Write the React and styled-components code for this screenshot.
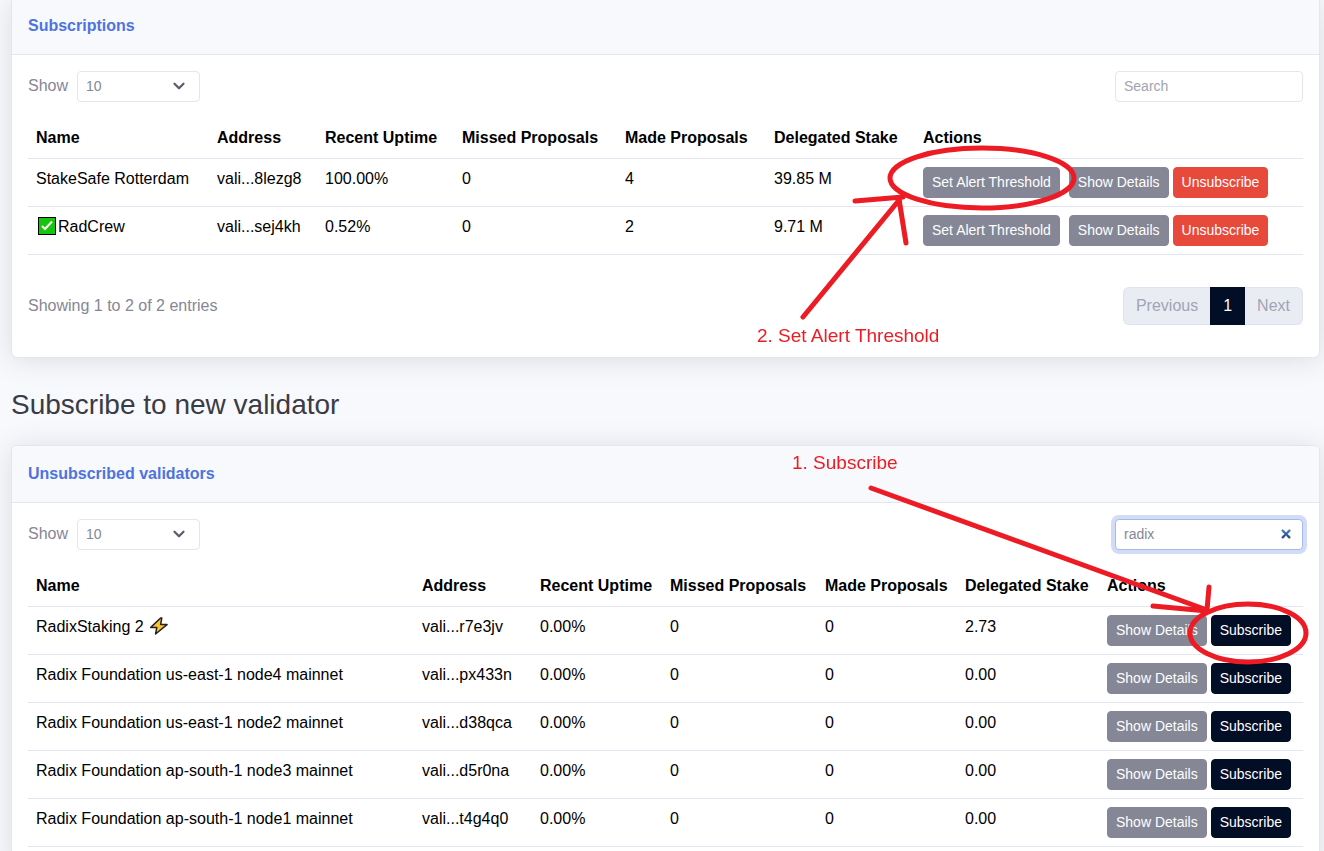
import styled, { createGlobalStyle, css } from "styled-components"
import { useId, useState } from "react"

const subscribed = [
  {
    name: "StakeSafe Rotterdam",
    address: "vali...8lezg8",
    uptime: "100.00%",
    missed: 0,
    made: 4,
    stake: "39.85 M",
  },
  {
    name: "RadCrew",
    badge: "check",
    address: "vali...sej4kh",
    uptime: "0.52%",
    missed: 0,
    made: 2,
    stake: "9.71 M",
  },
]

const unsubscribed = [
  {
    name: "RadixStaking 2",
    badge: "bolt",
    address: "vali...r7e3jv",
    uptime: "0.00%",
    missed: 0,
    made: 0,
    stake: "2.73",
  },
  {
    name: "Radix Foundation us-east-1 node4 mainnet",
    address: "vali...px433n",
    uptime: "0.00%",
    missed: 0,
    made: 0,
    stake: "0.00",
  },
  {
    name: "Radix Foundation us-east-1 node2 mainnet",
    address: "vali...d38qca",
    uptime: "0.00%",
    missed: 0,
    made: 0,
    stake: "0.00",
  },
  {
    name: "Radix Foundation ap-south-1 node3 mainnet",
    address: "vali...d5r0na",
    uptime: "0.00%",
    missed: 0,
    made: 0,
    stake: "0.00",
  },
  {
    name: "Radix Foundation ap-south-1 node1 mainnet",
    address: "vali...t4g4q0",
    uptime: "0.00%",
    missed: 0,
    made: 0,
    stake: "0.00",
  },
]

const headings = [
  "Name",
  "Address",
  "Recent Uptime",
  "Missed Proposals",
  "Made Proposals",
  "Delegated Stake",
  "Actions",
]

// relative column widths, in the order of the headings
const subscribedCols = [ 181, 108, 137, 163, 149, 149, 388 ]
const unsubscribedCols = [ 386, 118, 130, 155, 140, 142, 204 ]

const CheckBadge = () => (
  <Badge viewBox="0 0 18 18" aria-hidden="true">
    <rect x="0.5" y="0.5" width="17" height="17" fill="#16c60c" stroke="#000" />
    <path d="M4 9 L7 12 L14 4.5" fill="none" stroke="#fff" strokeWidth="2" />
  </Badge>
)

const BoltBadge = () => (
  <Badge viewBox="0 0 18 18" aria-hidden="true">
    <path
      d="M10.6 1 L0.8 10.4 H6.8 L5.6 17 L17 7.6 H10.6 L11.8 1 Z"
      fill="#fcc32c"
      stroke="#222"
      strokeWidth="1.5"
      strokeLinejoin="round"
    />
  </Badge>
)

const Toolbar = ({ search, setSearch, focused }) => {
  const id = useId()

  return (
    <ToolbarRow>
      <Length>
        <label htmlFor={`${id}length`}>Show</label>
        <SelectWrap>
          <select id={`${id}length`} defaultValue="10">
            <option>10</option>
            <option>25</option>
            <option>50</option>
          </select>
          <svg viewBox="0 0 16 16" aria-hidden="true">
            <path d="m2 5 6 6 6-6" />
          </svg>
        </SelectWrap>
      </Length>
      <Search
        type="search"
        placeholder="Search"
        aria-label="Search"
        value={search}
        autoFocus={focused}
        onChange={(e) => setSearch(e.target.value)}
      />
    </ToolbarRow>
  )
}

const ValidatorTable = ({ rows, cols, actions }) => (
  <Table>
    <colgroup>
      {cols.map((width, i) => (
        <Col key={headings[ i ]} $width={width} />
      ))}
    </colgroup>
    <thead>
      <tr>
        {headings.map((heading) => (
          <th key={heading}>{heading}</th>
        ))}
      </tr>
    </thead>
    <tbody>
      {rows.map((row) => (
        <tr key={row.address}>
          <td>
            {row.badge === "check" && <CheckBadge />}
            {row.name}
            {row.badge === "bolt" && <> <BoltBadge /></>}
          </td>
          <td>{row.address}</td>
          <td>{row.uptime}</td>
          <td>{row.missed}</td>
          <td>{row.made}</td>
          <td>{row.stake}</td>
          <td>
            <Actions>{actions}</Actions>
          </td>
        </tr>
      ))}
    </tbody>
  </Table>
)

const App = () => {
  const [ subSearch, setSubSearch ] = useState("")
  const [ search, setSearch ] = useState("radix")

  return (
    <>
      <GlobalStyle />
      <Page>
        <Card $attached>
          <CardHeader $attached>
            <h6>Subscriptions</h6>
          </CardHeader>
          <CardBody>
            <Toolbar search={subSearch} setSearch={setSubSearch} />
            <ValidatorTable
              rows={subscribed}
              cols={subscribedCols}
              actions={
                <>
                  <Button $spaced>Set Alert Threshold</Button>
                  <Button>Show Details</Button>
                  <Button $color="#e74a3b">Unsubscribe</Button>
                </>
              }
            />
            <TableFooter>
              <p>Showing 1 to 2 of 2 entries</p>
              <Pagination aria-label="Pages">
                <button disabled>Previous</button>
                <button className="active">1</button>
                <button disabled>Next</button>
              </Pagination>
            </TableFooter>
          </CardBody>
        </Card>

        <Title>Subscribe to new validator</Title>

        <Card>
          <CardHeader>
            <h6>Unsubscribed validators</h6>
          </CardHeader>
          <CardBody>
            <Toolbar search={search} setSearch={setSearch} focused />
            <ValidatorTable
              rows={unsubscribed}
              cols={unsubscribedCols}
              actions={
                <>
                  <Button>Show Details</Button>
                  <Button $color="#020d26">Subscribe</Button>
                </>
              }
            />
          </CardBody>
        </Card>

        <Notes viewBox="0 0 1324 851">
          <ellipse cx="982" cy="178" rx="92" ry="30" />
          <path d="M803 317 L900 199 M855 201 L903 197 M899 199 L906 243" />
          <text x="757" y="342">2. Set Alert Threshold</text>
          <ellipse cx="1248" cy="633" rx="58" ry="29" />
          <path d="M871 488 L1207 610 M1153 606 L1207 611 M1209 587 L1207 610" />
          <text x="792" y="469">1. Subscribe</text>
        </Notes>
      </Page>
    </>
  )
}

export default App

const GlobalStyle = createGlobalStyle`
  * {
    box-sizing: border-box;
  }

  body {
    margin: 0;
    background-color: #f8f9fc;
    color: #858796;
    font-family: "Liberation Sans", Arial, sans-serif;
    font-size: 16px;
    line-height: 24px;
  }

  h3, h6, p {
    margin: 0;
  }

  button, input, select {
    font-family: inherit;
  }
`

const Page = styled.main`
  position: relative;
  height: 100vh;
  padding: 0 4px 0 11px;
  overflow: hidden;
`

const Card = styled.section`
  background-color: #fff;
  border: 1px solid #e3e6f0;
  border-radius: 6px;
  box-shadow: 0 2px 28px rgba(58, 59, 69, 0.15);

  ${({ $attached }) => $attached && css`
    border-top: 0;
    border-top-left-radius: 0;
    border-top-right-radius: 0;
  `}
`

const CardHeader = styled.header`
  padding: ${({ $attached }) => ($attached ? "14px 16px 16px" : "16px")};
  background-color: #f8f9fc;
  border-bottom: 1px solid #e3e6f0;
  border-radius: ${({ $attached }) => ($attached ? "0" : "5px 5px 0 0")};

  h6 {
    color: #4e73df;
    font-size: 16px;
    font-weight: bold;
  }
`

const CardBody = styled.div`
  padding: 16px;
`

const Title = styled.h3`
  margin: 30px 0 23px;
  color: #3a3b45;
  font-size: 28px;
  font-weight: 400;
  line-height: 34px;
`

const ToolbarRow = styled.div`
  display: flex;
  justify-content: space-between;
  margin-bottom: 16px;
`

const Length = styled.div`
  display: flex;
  align-items: center;
  gap: 9px;

  label {
    padding-bottom: 2px;
  }
`

const field = css`
  height: 31px;
  padding: 4px 8px;
  background-color: #fff;
  border: 1px solid #e3e6f0;
  border-radius: 4px;
  color: #858796;
  font-size: 14px;
  line-height: 21px;
`

const SelectWrap = styled.div`
  position: relative;
  height: 31px;

  select {
    ${field}
    width: 123px;
    appearance: none;
  }

  svg {
    position: absolute;
    top: 9px;
    right: 13px;
    width: 16px;
    height: 12px;
    pointer-events: none;
    fill: none;
    stroke: #5a5c69;
    stroke-width: 3;
    stroke-linecap: round;
    stroke-linejoin: round;
  }
`

const Search = styled.input`
  ${field}
  width: 188px;
  padding: 3px 8px 5px;
  outline: none;
  caret-color: transparent;

  &::placeholder {
    color: #a2a3b0;
  }

  &:focus {
    border-color: #a7b9ef;
    box-shadow: 0 0 0 4px rgba(78, 115, 223, 0.25);
  }
`

const Table = styled.table`
  width: 100%;
  table-layout: fixed;
  border-collapse: separate;
  border-spacing: 0;
  color: #000;

  th,
  td {
    padding: 8px;
    border-bottom: 1px solid #e3e6f0;
    text-align: left;
    vertical-align: top;
    white-space: nowrap;
  }
`

const Col = styled.col`
  width: ${({ $width }) => $width}px;
`

const Actions = styled.div`
  display: flex;
  gap: 4px;
`

const Button = styled.button`
  height: 31px;
  margin-right: ${({ $spaced }) => ($spaced ? "5px" : "0")};
  padding: 4px 8px;
  background-color: ${({ $color }) => $color || "#858796"};
  border: 1px solid ${({ $color }) => $color || "#858796"};
  border-radius: 4px;
  color: #fff;
  font-size: 14px;
  line-height: 21px;
  cursor: pointer;
`

const Badge = styled.svg`
  width: 18px;
  height: 18px;
  margin: 0 2px;
  vertical-align: -3px;
`

const TableFooter = styled.div`
  display: flex;
  justify-content: space-between;
  align-items: center;
  padding: 32px 0 16px;
`

const Pagination = styled.nav`
  display: flex;

  button {
    height: 38px;
    padding: 6px 12px;
    background-color: #eaecf4;
    border: 1px solid #e0e3ee;
    color: #a2a3b3;
    font-size: 16px;
    line-height: 24px;
  }

  button:first-child {
    border-right: 0;
    border-radius: 6px 0 0 6px;
  }

  button:last-child {
    border-left: 0;
    border-radius: 0 6px 6px 0;
  }

  .active {
    background-color: #020d26;
    border-color: #020d26;
    color: #fff;
  }
`

const Notes = styled.svg`
  position: absolute;
  top: 0;
  left: 0;
  width: 100%;
  pointer-events: none;
  fill: none;
  stroke: #ed1c24;
  stroke-width: 5;
  stroke-linecap: round;

  text {
    fill: #ed1c24;
    stroke: none;
    font-size: 19px;
  }
`
